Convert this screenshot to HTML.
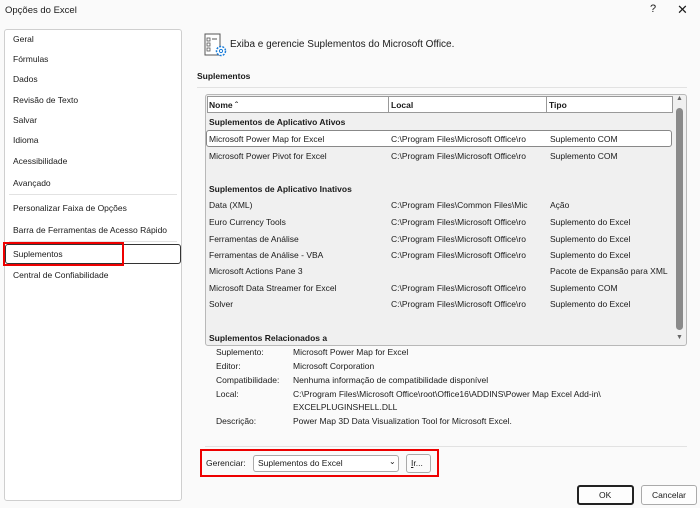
<!DOCTYPE html>
<html><head><style>
*{margin:0;padding:0;box-sizing:border-box}
body{width:700px;height:508px;background:#fafafa;font-family:"Liberation Sans",sans-serif;font-size:8.5px;color:#1a1a1a;position:relative;overflow:hidden}
.a{position:absolute;white-space:nowrap}
.b{font-weight:bold}
#left{position:absolute;left:4px;top:29px;width:178px;height:472px;border:1px solid #cfcfcf;border-radius:3px;background:#fff}
.sep{position:absolute;height:1px;background:#e2e2e2}
</style></head><body>
<div class="a" style="left:5px;top:5px;font-size:9.5px">Opções do Excel</div>
<div class="a" style="left:650px;top:3px;font-size:11px">?</div>
<div class="a" style="left:677px;top:2px;font-size:13px">✕</div>
<div id="left"></div>
<div class="a" style="left:13px;top:34px">Geral</div>
<div class="a" style="left:13px;top:54px">Fórmulas</div>
<div class="a" style="left:13px;top:74px">Dados</div>
<div class="a" style="left:13px;top:95px">Revisão de Texto</div>
<div class="a" style="left:13px;top:115px">Salvar</div>
<div class="a" style="left:13px;top:135px">Idioma</div>
<div class="a" style="left:13px;top:156px">Acessibilidade</div>
<div class="a" style="left:13px;top:178px">Avançado</div>
<div class="sep" style="left:9px;top:194px;width:168px"></div>
<div class="a" style="left:13px;top:203px">Personalizar Faixa de Opções</div>
<div class="a" style="left:13px;top:225px">Barra de Ferramentas de Acesso Rápido</div>
<div class="sep" style="left:9px;top:241px;width:168px"></div>
<div style="position:absolute;left:5px;top:244px;width:176px;height:20px;border:1px solid #333;border-radius:3px"></div>
<div style="position:absolute;left:3px;top:242px;width:121px;height:24px;border:2px solid #e00"></div>
<div class="a" style="left:13px;top:249px">Suplementos</div>
<div class="a" style="left:13px;top:270px">Central de Confiabilidade</div>

<svg class="a" style="left:204px;top:33px" width="24" height="26" viewBox="0 0 24 26"><rect x="1" y="1" width="15" height="21" fill="#fff" stroke="#555"/><rect x="3" y="5" width="3" height="3" fill="none" stroke="#555" stroke-width=".8"/><rect x="3" y="10" width="3" height="3" fill="none" stroke="#555" stroke-width=".8"/><rect x="3" y="15" width="3" height="3" fill="none" stroke="#555" stroke-width=".8"/><line x1="8" y1="6" x2="13" y2="6" stroke="#555"/><circle cx="17" cy="18" r="4.5" fill="#fff" stroke="#1a7cd8" stroke-width="1.5" stroke-dasharray="2 1.2"/><circle cx="17" cy="18" r="1.6" fill="none" stroke="#1a7cd8"/></svg>
<div class="a" style="left:230px;top:39px;font-size:10px">Exiba e gerencie Suplementos do Microsoft Office.</div>
<div class="a b" style="left:197px;top:71px">Suplementos</div>
<div class="sep" style="left:197px;top:87px;width:490px"></div>

<div style="position:absolute;left:205px;top:94px;width:482px;height:252px;border:1px solid #b8b8b8;border-radius:3px;background:#f0f0f0"></div>
<div style="position:absolute;left:207px;top:96px;width:466px;height:17px;background:#fff;border:1px solid #999"></div>
<div style="position:absolute;left:388px;top:96px;width:1px;height:17px;background:#999"></div>
<div style="position:absolute;left:546px;top:96px;width:1px;height:17px;background:#999"></div>
<div class="a b" style="left:209px;top:100px">Nome ˆ</div>
<div class="a b" style="left:391px;top:100px">Local</div>
<div class="a b" style="left:549px;top:100px">Tipo</div>
<div class="a" style="left:676px;top:95px;font-size:7px;color:#666">▲</div>
<div style="position:absolute;left:676px;top:108px;width:7px;height:222px;background:#8a8a8a;border-radius:4px"></div>
<div class="a" style="left:676px;top:334px;font-size:7px;color:#666">▼</div>
<div style="position:absolute;left:206px;top:130px;width:466px;height:17px;background:#fff;border:1px solid #888;border-radius:3px"></div>

<div class="a b" style="left:209px;top:117px">Suplementos de Aplicativo Ativos</div>
<div class="a" style="left:209px;top:134px">Microsoft Power Map for Excel</div><div class="a" style="left:391px;top:134px">C:\Program Files\Microsoft Office\ro</div><div class="a" style="left:550px;top:134px">Suplemento COM</div>
<div class="a" style="left:209px;top:151px">Microsoft Power Pivot for Excel</div><div class="a" style="left:391px;top:151px">C:\Program Files\Microsoft Office\ro</div><div class="a" style="left:550px;top:151px">Suplemento COM</div>
<div class="a b" style="left:209px;top:184px">Suplementos de Aplicativo Inativos</div>
<div class="a" style="left:209px;top:200px">Data (XML)</div><div class="a" style="left:391px;top:200px">C:\Program Files\Common Files\Mic</div><div class="a" style="left:550px;top:200px">Ação</div>
<div class="a" style="left:209px;top:217px">Euro Currency Tools</div><div class="a" style="left:391px;top:217px">C:\Program Files\Microsoft Office\ro</div><div class="a" style="left:550px;top:217px">Suplemento do Excel</div>
<div class="a" style="left:209px;top:234px">Ferramentas de Análise</div><div class="a" style="left:391px;top:234px">C:\Program Files\Microsoft Office\ro</div><div class="a" style="left:550px;top:234px">Suplemento do Excel</div>
<div class="a" style="left:209px;top:250px">Ferramentas de Análise - VBA</div><div class="a" style="left:391px;top:250px">C:\Program Files\Microsoft Office\ro</div><div class="a" style="left:550px;top:250px">Suplemento do Excel</div>
<div class="a" style="left:209px;top:266px">Microsoft Actions Pane 3</div><div class="a" style="left:550px;top:266px">Pacote de Expansão para XML</div>
<div class="a" style="left:209px;top:283px">Microsoft Data Streamer for Excel</div><div class="a" style="left:391px;top:283px">C:\Program Files\Microsoft Office\ro</div><div class="a" style="left:550px;top:283px">Suplemento COM</div>
<div class="a" style="left:209px;top:299px">Solver</div><div class="a" style="left:391px;top:299px">C:\Program Files\Microsoft Office\ro</div><div class="a" style="left:550px;top:299px">Suplemento do Excel</div>
<div class="a b" style="left:209px;top:333px">Suplementos Relacionados a</div>

<div class="a" style="left:216px;top:347px">Suplemento:</div><div class="a" style="left:293px;top:347px">Microsoft Power Map for Excel</div>
<div class="a" style="left:216px;top:361px">Editor:</div><div class="a" style="left:293px;top:361px">Microsoft Corporation</div>
<div class="a" style="left:216px;top:375px">Compatibilidade:</div><div class="a" style="left:293px;top:375px">Nenhuma informação de compatibilidade disponível</div>
<div class="a" style="left:216px;top:389px">Local:</div><div class="a" style="left:293px;top:389px">C:\Program Files\Microsoft Office\root\Office16\ADDINS\Power Map Excel Add-in\</div>
<div class="a" style="left:293px;top:402px">EXCELPLUGINSHELL.DLL</div>
<div class="a" style="left:216px;top:416px">Descrição:</div><div class="a" style="left:293px;top:416px">Power Map 3D Data Visualization Tool for Microsoft Excel.</div>
<div class="sep" style="left:205px;top:446px;width:482px"></div>

<div style="position:absolute;left:200px;top:449px;width:239px;height:28px;border:2px solid #e00"></div>
<div class="a" style="left:206px;top:458px">Gerenciar:</div>
<div style="position:absolute;left:253px;top:455px;width:146px;height:17px;border:1px solid #aaa;border-radius:3px;background:#fff"></div>
<div class="a" style="left:258px;top:458px">Suplementos do Excel</div>
<div class="a" style="left:389px;top:457px;font-size:8px">⌄</div>
<div style="position:absolute;left:406px;top:454px;width:25px;height:19px;border:1px solid #aaa;border-radius:3px;background:#fbfbfb"></div>
<div class="a" style="left:411px;top:458px"><u>I</u>r...</div>

<div style="position:absolute;left:577px;top:485px;width:57px;height:20px;border:2px solid #222;border-radius:3px;background:#fdfdfd"></div>
<div class="a" style="left:599px;top:490px">OK</div>
<div style="position:absolute;left:641px;top:485px;width:56px;height:20px;border:1px solid #aaa;border-radius:3px;background:#fdfdfd"></div>
<div class="a" style="left:652px;top:490px">Cancelar</div>
</body></html>
